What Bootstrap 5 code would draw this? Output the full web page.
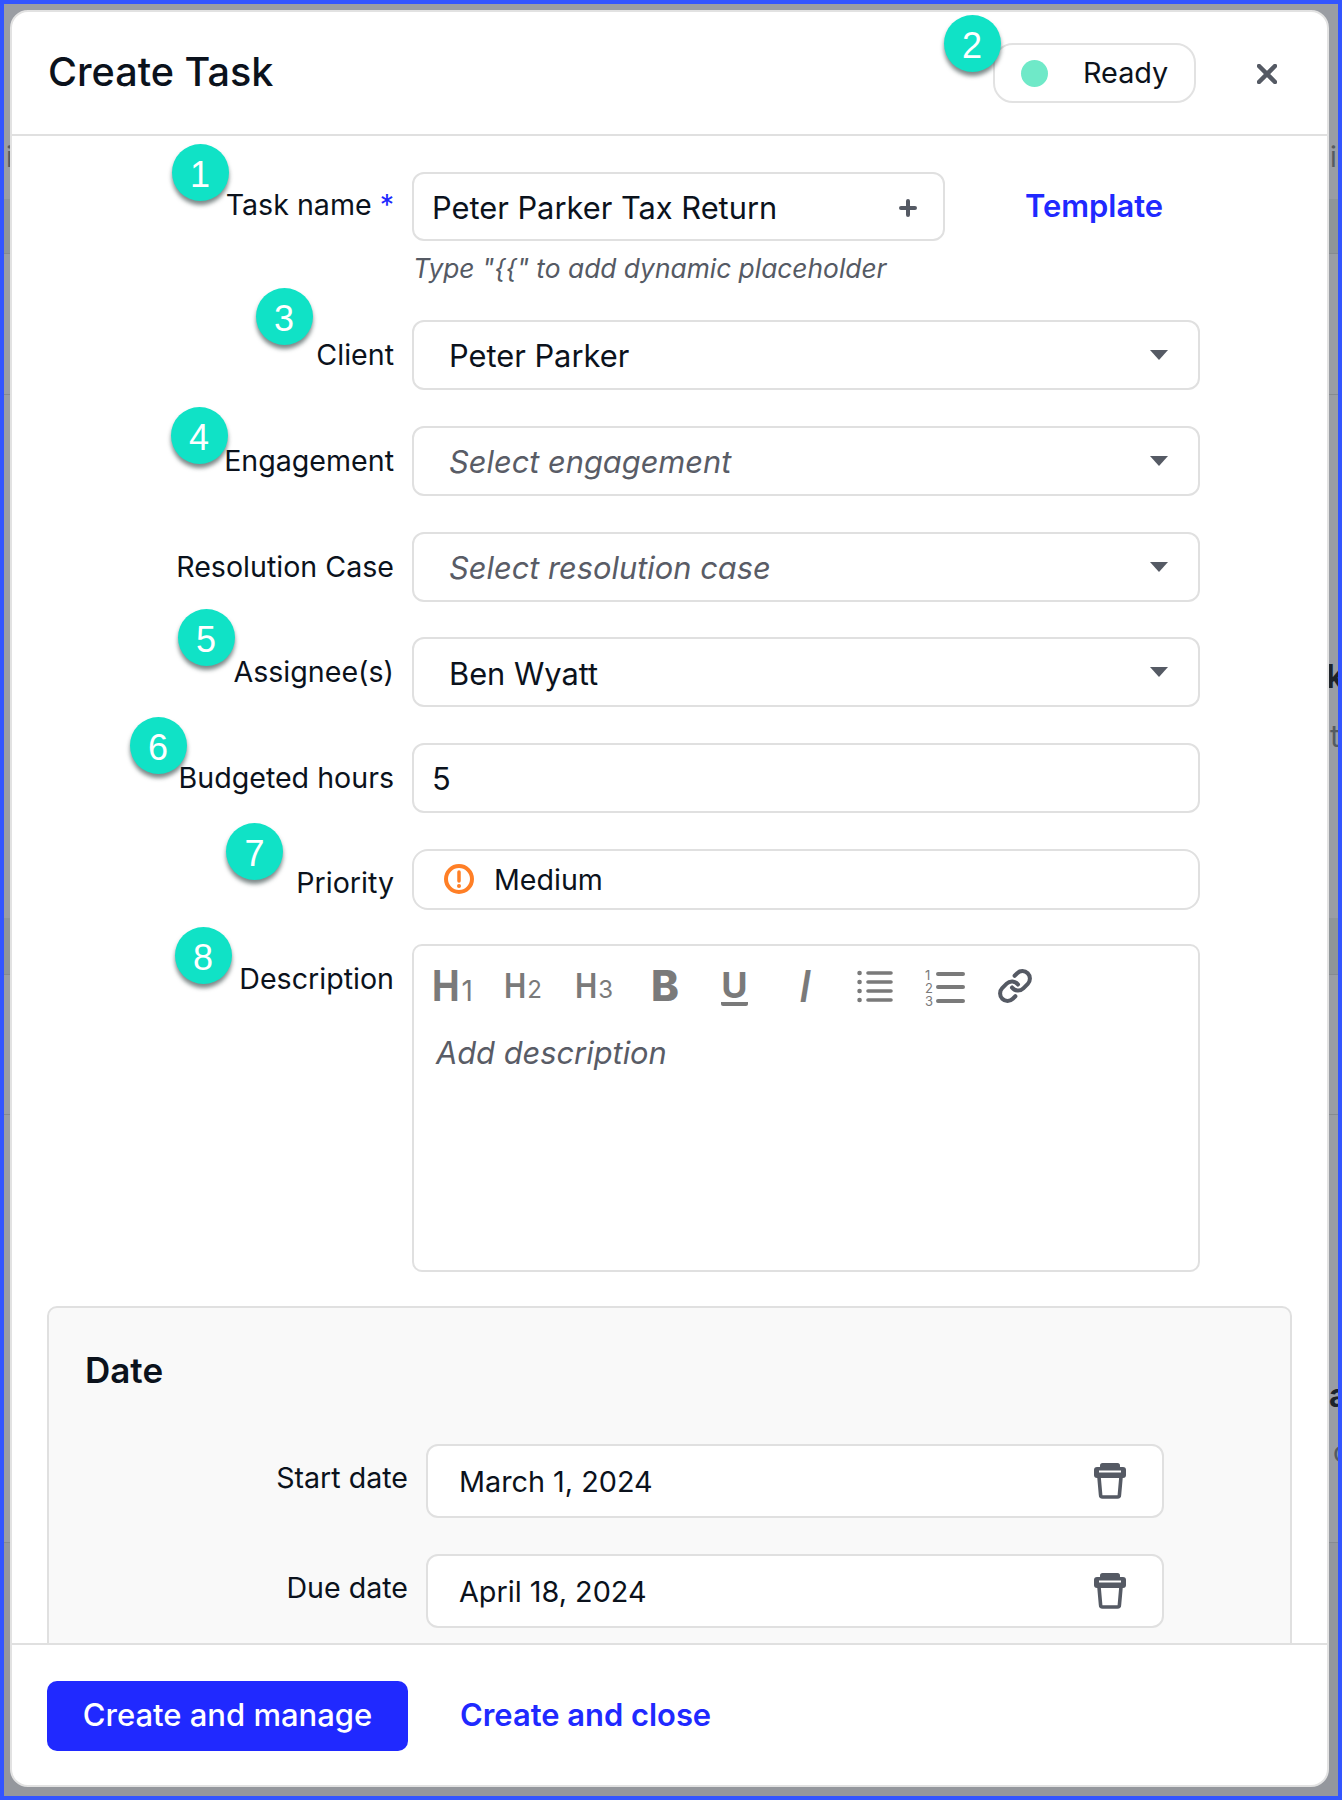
<!DOCTYPE html>
<html lang="en"><head><meta charset="utf-8"><title>Create Task</title>
<link href="https://cdn.jsdelivr.net/npm/bootstrap@5.3.0/dist/css/bootstrap.min.css" rel="stylesheet">
<style>
html,body{margin:0;background:#3355ff}
body{font-family:Inter,"Liberation Sans",sans-serif;color:#0b121c;height:1800px;overflow:hidden}
.stage{position:relative;margin:4px;height:1792px;width:1334px;padding:6px 9px 9px 6px;overflow:hidden;
background:linear-gradient(to bottom,#9a9da3 195px,#8f9598 195px,#8f9598 249px,#868a8f 249px,#868a8f 250px,#9a9da3 250px,#9a9da3 390px,#868a8f 390px,#868a8f 391px,#9a9da3 391px,#9a9da3 914px,#8f9598 914px,#8f9598 970px,#868a8f 970px,#868a8f 971px,#9a9da3 971px,#9a9da3 1110px,#868a8f 1110px,#868a8f 1111px,#9a9da3 1111px,#9a9da3 1538px,#868a8f 1538px,#868a8f 1539px,#94979d 1539px)}
.ghost{position:absolute;line-height:1;white-space:nowrap;z-index:0}
.g1{left:2px;top:139px;font-size:28px;color:#555b60}
.g2{left:1326px;top:139px;font-size:28px;color:#555b60}
.g3{left:1322px;top:657px;font-size:32px;font-weight:700;color:#1d232a}
.g4{left:1326px;top:717px;font-size:30px;color:#555b60}
.g5{left:1325px;top:1376px;font-size:32px;font-weight:700;color:#1d232a}
.g6{left:1329px;top:1434px;font-size:28px;color:#555b60}
.dlg.modal-content{height:100%;border:2px solid #e2e2e2;border-radius:18px;overflow:hidden;background:#fff;position:relative;z-index:1}
.dlg .modal-header{flex:0 0 auto;height:124px;padding:0 0 0 36px;border-bottom:2px solid #e0e0e0;justify-content:flex-start}
.dlg-title{font-size:39.6px;font-weight:500;line-height:1;margin:0;flex:1}
.status{width:203px;height:60px;border:2px solid #e2e2e2;border-radius:20px;padding-left:26px;font-size:28.8px;gap:35px;margin-right:61px}
.status-dot{width:27px;height:27px;border-radius:50%;background:#6fe9c8}
.close-x{width:20px;height:20px;margin:2px 50px 0 0}
.dlg .modal-body{flex:1 1 auto;padding:36px 35px 0;overflow:hidden}
.form-line{display:flex;margin-bottom:35.75px}
.form-line.first{margin-bottom:36.5px}
.form-line.pri{margin-bottom:34.5px}
.form-line.last{margin-bottom:34px}
.fld-label{width:365px;padding:21px 18px 0 0;text-align:right;font-size:28.6px;line-height:1;flex:none;white-space:nowrap}
.first .fld-label{padding-top:19px}
.pri .fld-label{padding-top:20px}
.req{color:#2029ff}
.fld{width:788px;height:70px;border:2px solid #e0e0e0;border-radius:12px;background:#fff;font-size:30.8px;display:flex;align-items:center;padding:3px 18px 0}
.fld.sel{padding:3px 30px 0 35px;justify-content:space-between}
.fld.prio{height:61px;padding:0 18px 0 30px;gap:20px;border-radius:16px}
.prio-text{font-size:28.6px;padding-top:2px}
.ph{font-style:italic;color:#595c66}
.caret-d{width:0;height:0;margin-top:-3px;border-left:9.5px solid transparent;border-right:9.5px solid transparent;border-top:10px solid #555a64}
.name-wrap{width:533px;flex:none}
.name-wrap .fld{width:533px;height:68.5px;justify-content:space-between;padding:3px 26px 0 18px}
.hint{font-style:italic;font-size:26.35px;color:#555a64;margin:11px 0 0 1px;line-height:32px;white-space:nowrap}
.tmpl{font-size:30.9px;font-weight:600;color:#2029ff;text-decoration:none;margin-left:80px;line-height:1;margin-top:19px}
.editor{width:788px;height:327.5px;border:2px solid #e0e0e0;border-radius:10px;padding:25px 0 0 18px}
.tools{display:flex;align-items:flex-start;color:#7a7a7a;height:36px}
.tool{flex:none;line-height:1;display:block}
.t-h1{width:72px;font-size:42px;font-weight:700;margin-top:-6px}
.t-h2{width:71px;font-size:34px;font-weight:600;margin-top:-2px}
.t-h3{width:76px;font-size:34px;font-weight:600;margin-top:-2px}
.h-cap{display:inline-block;transform:scaleX(.88);transform-origin:left bottom;margin-right:-2px}
.h-num1{font-size:28px;font-weight:400}
.h-num{font-size:24px;font-weight:400}
.t-b{width:70px;font-size:42px;font-weight:800;margin-top:-6px}
.t-u{width:78px}
.u-in{display:block;width:27px;font-size:36px;font-weight:700;line-height:28px;text-align:center;border-bottom:4px solid #7a7a7a;border-radius:0 0 2px 2px;padding-bottom:3px}
.t-i{width:58px;font-size:44px;font-weight:500;font-style:italic;margin-top:-7px}
.t-ul{width:68px;margin-top:-1px}
.t-ol{width:72px;margin-top:-1px}
.t-link{margin-top:-3px}
.ed-ph{font-size:30.8px;font-style:italic;color:#595c66;margin:26px 0 0 4px;line-height:40px}
.date-box{background:#f9f9f9;border:2px solid #e0e0e0;border-radius:10px 10px 0 0;height:520px;width:1245px;padding:45px 36px 0}
.date-title{font-size:35px;font-weight:600;line-height:1;margin:0 0 56px}
.date-line{display:flex;margin-bottom:36px}
.date-label{width:341px;text-align:right;font-size:28.6px;line-height:1;padding:20px 18px 0 0;flex:none}
.date-fld{width:738px;height:74px;border:2px solid #e0e0e0;border-radius:12px;background:#fff;font-size:28.8px;display:flex;align-items:center;justify-content:space-between;padding:0 36px 0 31px}
.date-val{padding-top:2px}
.dlg .modal-footer{flex:0 0 auto;height:142px;border-top:2px solid #e0e0e0;padding:1px 0 0 35px;justify-content:flex-start;gap:0}
.btn-make.btn{background:#2029ff;border:0;color:#fff;font-size:31px;font-weight:500;width:361px;height:70px;border-radius:10px;margin:0;padding:0}
.link-close{color:#2029ff;font-size:30.9px;font-weight:600;text-decoration:none;margin:0 0 0 52px}
.pin{position:absolute;z-index:2;width:57px;height:57px;border-radius:50%;background:#10e2c6;color:#fff;font-family:"Liberation Sans",sans-serif;font-size:36px;line-height:61px;text-align:center;box-shadow:0 4px 4px rgba(20,40,40,.55);margin:-28.5px 0 0 -28.5px}
.pin1{left:196px;top:168px}.pin2{left:968px;top:39.5px}.pin3{left:280px;top:312px}.pin4{left:195px;top:431px}
.pin5{left:202px;top:633.5px}.pin6{left:154px;top:741px}.pin7{left:250.5px;top:847.5px}.pin8{left:199px;top:951px}
</style></head>
<body>
<div class="stage">
<span class="ghost g1">i</span><span class="ghost g2">i</span><span class="ghost g3">k</span><span class="ghost g4">t</span><span class="ghost g5">a</span><span class="ghost g6">c</span>
<div class="modal-content dlg">
  <div class="modal-header">
    <h1 class="dlg-title">Create Task</h1>
    <div class="status d-flex align-items-center"><span class="status-dot"></span><span>Ready</span></div>
    <svg class="close-x" viewBox="0 0 20 20"><path d="M2 2l16 16M18 2L2 18" stroke="#555a64" stroke-width="4.5" stroke-linecap="round"/></svg>
  </div>
  <div class="modal-body">
    <div class="form-line first">
      <div class="fld-label">Task name <span class="req">*</span></div>
      <div class="name-wrap">
        <div class="fld"><span>Peter Parker Tax Return</span><svg width="18" height="18" viewBox="0 0 18 18"><path d="M9 2v14M2 9h14" stroke="#555a64" stroke-width="4" stroke-linecap="round"/></svg></div>
        <div class="hint">Type "{{" to add dynamic placeholder</div>
      </div>
      <a class="tmpl" href="#">Template</a>
    </div>
    <div class="form-line"><div class="fld-label">Client</div><div class="fld sel"><span>Peter Parker</span><span class="caret-d"></span></div></div>
    <div class="form-line"><div class="fld-label">Engagement</div><div class="fld sel"><span class="ph">Select engagement</span><span class="caret-d"></span></div></div>
    <div class="form-line"><div class="fld-label">Resolution Case</div><div class="fld sel"><span class="ph">Select resolution case</span><span class="caret-d"></span></div></div>
    <div class="form-line"><div class="fld-label">Assignee(s)</div><div class="fld sel"><span>Ben Wyatt</span><span class="caret-d"></span></div></div>
    <div class="form-line"><div class="fld-label">Budgeted hours</div><div class="fld">5</div></div>
    <div class="form-line pri"><div class="fld-label">Priority</div><div class="fld prio">
      <svg width="30" height="30" viewBox="0 0 30 30"><circle cx="15" cy="15" r="13" fill="none" stroke="#ff7f26" stroke-width="4"/><path d="M15 8v9" stroke="#ff7f26" stroke-width="3.5" stroke-linecap="round"/><circle cx="15" cy="22" r="2" fill="#ff7f26"/></svg>
      <span class="prio-text">Medium</span></div></div>
    <div class="form-line last"><div class="fld-label">Description</div>
      <div class="editor">
        <div class="tools">
          <span class="tool t-h1"><span class="h-cap">H</span><span class="h-num1">1</span></span>
          <span class="tool t-h2"><span class="h-cap">H</span><span class="h-num">2</span></span>
          <span class="tool t-h3"><span class="h-cap">H</span><span class="h-num">3</span></span>
          <span class="tool t-b">B</span>
          <span class="tool t-u"><span class="u-in">U</span></span>
          <span class="tool t-i">I</span>
          <svg class="tool t-ul" preserveAspectRatio="xMinYMin" width="36" height="34" viewBox="0 0 68 34" fill="none" stroke="#7a7a7a" stroke-linecap="round"><path d="M11 3h23M11 12h23M11 21h23M11 30h23" stroke-width="3.6"/><path d="M2.5 3h.1M2.5 12h.1M2.5 21h.1M2.5 30h.1" stroke-width="4.5"/></svg>
          <svg class="tool t-ol" preserveAspectRatio="xMinYMin" width="40" height="36" viewBox="0 0 72 36" fill="none" stroke="#7a7a7a" stroke-linecap="round"><path d="M13 4h25M13 17h25M13 31h25" stroke-width="4"/><g fill="#7a7a7a" stroke="none" font-family="Inter,sans-serif" font-size="13"><text x="0" y="10">1</text><text x="0" y="23">2</text><text x="0" y="36">3</text></g></svg>
          <svg class="tool t-link" width="36" height="36" viewBox="0 0 24 24" fill="none" stroke="#555a64" stroke-width="2.7" stroke-linecap="round" stroke-linejoin="round"><path d="M10 13a5 5 0 0 0 7.54.54l3-3a5 5 0 0 0-7.07-7.07l-1.72 1.71"/><path d="M14 11a5 5 0 0 0-7.54-.54l-3 3a5 5 0 0 0 7.07 7.07l1.71-1.71"/></svg>
        </div>
        <div class="ed-ph">Add description</div>
      </div>
    </div>
    <div class="date-box">
      <h2 class="date-title">Date</h2>
      <div class="date-line"><div class="date-label">Start date</div><div class="date-fld"><span class="date-val">March 1, 2024</span>
        <svg width="32" height="36" viewBox="0 0 32 36"><rect x="6" y="0" width="20" height="8" rx="2.5" fill="#555a64"/><rect x="0" y="4" width="32" height="11" rx="3" fill="#555a64"/><rect x="5" y="7.5" width="22" height="2" fill="#fff"/><path d="M5 14l1.6 18a2 2 0 0 0 2 2h14.8a2 2 0 0 0 2-2L27 14" fill="none" stroke="#555a64" stroke-width="3.6"/></svg></div></div>
      <div class="date-line"><div class="date-label">Due date</div><div class="date-fld"><span class="date-val">April 18, 2024</span>
        <svg width="32" height="36" viewBox="0 0 32 36"><rect x="6" y="0" width="20" height="8" rx="2.5" fill="#555a64"/><rect x="0" y="4" width="32" height="11" rx="3" fill="#555a64"/><rect x="5" y="7.5" width="22" height="2" fill="#fff"/><path d="M5 14l1.6 18a2 2 0 0 0 2 2h14.8a2 2 0 0 0 2-2L27 14" fill="none" stroke="#555a64" stroke-width="3.6"/></svg></div></div>
    </div>
  </div>
  <div class="modal-footer">
    <button class="btn btn-make" type="button">Create and manage</button>
    <a class="link-close" href="#">Create and close</a>
  </div>
</div>
<span class="pin pin1">1</span><span class="pin pin2">2</span><span class="pin pin3">3</span><span class="pin pin4">4</span><span class="pin pin5">5</span><span class="pin pin6">6</span><span class="pin pin7">7</span><span class="pin pin8">8</span>
</div>
<script src="https://cdn.jsdelivr.net/npm/bootstrap@5.3.0/dist/js/bootstrap.bundle.min.js"></script>
</body></html>
